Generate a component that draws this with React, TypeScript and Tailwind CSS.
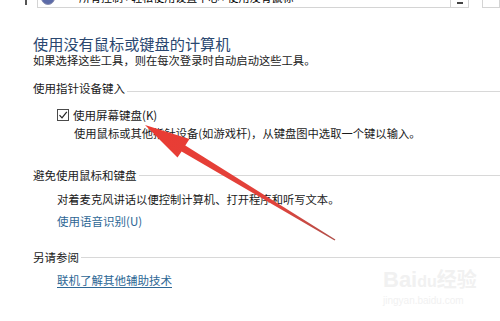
const font = { fontFamily: '"Noto Sans CJK SC", "Noto Sans", sans-serif' };

function Heading({ text, line = "mt-[5px]" }: { text: string; line?: string }) {
  return (
    <div className="flex items-center gap-[2px] text-[11.5px] leading-[16px] text-[#1a1a1a]">
      <span>{text}</span>
      <div className={`h-px flex-1 bg-[#d8d8d8] ${line}`} />
    </div>
  );
}

function Arrow() {
  return (
    <svg className="pointer-events-none absolute left-0 top-0" width="500" height="321" viewBox="0 0 500 321">
      <defs>
        <linearGradient id="ar" x1="145" y1="125" x2="335" y2="240" gradientUnits="userSpaceOnUse">
          <stop offset="0" stopColor="#ea3b33" />
          <stop offset="0.7" stopColor="#e0433c" />
          <stop offset="1" stopColor="#b0504a" />
        </linearGradient>
      </defs>
      <polygon
        points="145,125 189.5,139 185.3,145.5 335.4,239.5 334.6,240.6 181.6,151.5 177.5,157.5"
        fill="url(#ar)"
      />
    </svg>
  );
}

export default function App() {
  return (
    <div className="relative h-[321px] w-[500px] overflow-hidden bg-white" style={font}>
      {/* address bar, cut off at the top */}
      <div className="flex h-[8px] items-end overflow-hidden">
        <div className="ml-[25px] h-[5px] w-[2px] self-start bg-[#555]" />
        <div className="ml-[10px] flex h-[24px] w-[432px] items-end border border-[#d4d4d4] bg-white">
          <div className="mb-[2px] ml-[3px] h-[16px] w-[14px] rounded-full border border-[#8a8fb0] bg-[#5b6aa8]" />
          <span className="mb-[3px] ml-[24px] whitespace-nowrap text-[11px] leading-[14px] text-black">
            所有控制 › 轻松使用设置中心 › 使用没有鼠标
          </span>
          <div className="ml-auto flex h-full w-[18px] items-end justify-center border-l border-[#d4d4d4]">
            <div className="mb-[3px] h-[2px] w-[6px] bg-[#444]" />
          </div>
        </div>
        <div className="ml-[13px] h-[24px] flex-1 border border-[#d4d4d4]" />
      </div>

      <div className="pl-[33px]">
        <div className="mt-[26px] text-[15.2px] leading-[18px] text-[#2a4770]">使用没有鼠标或键盘的计算机</div>
        <div className="text-[11.3px] leading-[16px] text-[#1a1a1a]">
          如果选择这些工具，则在每次登录时自动启动这些工具。
        </div>

        <div className="mt-[12px]">
          <Heading text="使用指针设备键入" line="mt-[6px]" />
        </div>
        <div className="ml-[24px] mt-[11px] flex items-center gap-[4px] text-[11.5px] leading-[16px] text-[#1a1a1a]">
          <div className="flex h-[12px] w-[12px] items-center justify-center border border-[#4a4a4a] bg-white">
            <svg width="10" height="10" viewBox="0 0 10 10">
              <path d="M1.5 5.2 L4 7.8 L8.8 1.8" fill="none" stroke="#222" strokeWidth="1.2" />
            </svg>
          </div>
          <span>使用屏幕键盘(K)</span>
        </div>
        <div className="ml-[41px] mt-[2px] text-[11.3px] leading-[16px] text-[#1a1a1a]">
          使用鼠标或其他指针设备(如游戏杆)，从键盘图中选取一个键以输入。
        </div>

        <div className="mt-[26px]">
          <Heading text="避免使用鼠标和键盘" line="mt-0" />
        </div>
        <div className="ml-[24px] mt-[8px] text-[11.3px] leading-[16px] text-[#1a1a1a]">
          对着麦克风讲话以便控制计算机、打开程序和听写文本。
        </div>
        <div className="ml-[24px] mt-[6px] text-[11.5px] leading-[16px] text-[#2d6795]">使用语音识别(U)</div>

        <div className="mt-[20px]">
          <Heading text="另请参阅" line="mt-[1px]" />
        </div>
        <div className="ml-[24px] mt-[7px] text-[11.5px] leading-[16px] text-[#2d6795] underline underline-offset-2">
          联机了解其他辅助技术
        </div>
      </div>

      {/* watermark */}
      <div className="absolute left-[383px] top-[266px] flex flex-col items-start text-[#f1f1f1]">
        <span className="text-[22px] font-bold leading-[26px]" style={{ fontFamily: '"Liberation Sans", sans-serif' }}>
          Bai<span className="text-[16px]">du</span>
          <span className="text-[20px]" style={font}>经验</span>
        </span>
        <span className="text-[10px] leading-[12px]" style={{ fontFamily: '"Liberation Sans", sans-serif' }}>
          jingyan.baidu.com
        </span>
      </div>

      <Arrow />
    </div>
  );
}
